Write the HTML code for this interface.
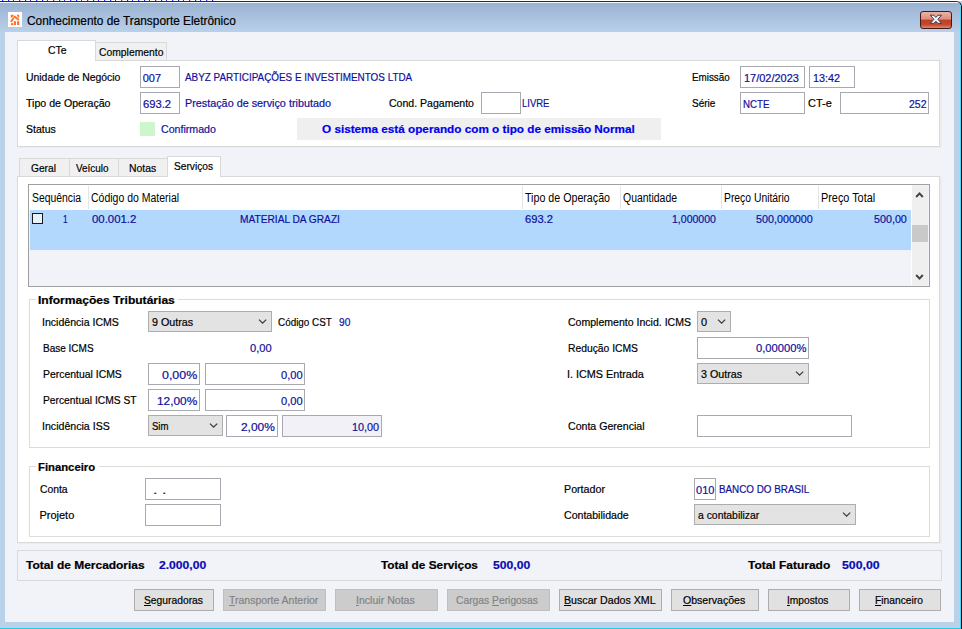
<!DOCTYPE html>
<html><head><meta charset="utf-8">
<style>
html,body{margin:0;padding:0;width:962px;height:629px;overflow:hidden;background:#bad1ea;position:relative;font-family:"Liberation Sans",sans-serif;}
div,span{position:absolute;box-sizing:border-box;}
.t{white-space:pre;transform-origin:0 0;font-family:"Liberation Sans",sans-serif;-webkit-text-stroke:0.2px currentColor;}
.in{background:#fff;border:1px solid #a9a9b1;}
.cb{background:#e3e3e3;border:1px solid #adadad;}
.btn{background:#e1e1e1;border:1px solid #adadad;top:589px;height:22px;}
.dis{background:#cccccc;border:1px solid #bfbfbf;}
.tab{background:#f0f0f0;border:1px solid #d9d9d9;border-bottom:none;}
.pnl{background:#fff;border:1px solid #d9d9d9;box-shadow:2px 1px 0 #ededed;}
.grp{border:1px solid #dcdcdc;}
.chev{width:9px;height:5px;}
</style></head><body>
<!-- top strip -->
<div style="left:0;top:0;width:962px;height:1px;background:#fff"></div>
<div style="left:0;top:0;width:217px;height:1px;background:repeating-linear-gradient(90deg,#fff 0,#fff 2px,#2a3ae0 2px,#2a3ae0 3px,#e8c0e0 3px,#e8c0e0 4px,#fff 4px,#fff 8px,#1a2ad0 8px,#1a2ad0 9px,#b8f0ff 9px,#b8f0ff 10px,#fff 10px,#fff 13px,#5020c0 13px,#5020c0 14px,#fff 14px,#fff 17px)"></div>
<!-- window frame -->
<div style="left:-10px;top:1px;width:972px;height:640px;border:1px solid #2a2a2a;border-right-color:#000;border-top-right-radius:6px;background:#bad1ea;overflow:hidden">
<div style="left:0;top:0;width:100%;height:1px;background:#f4f7fb"></div>
<div style="left:0;top:1px;width:970px;height:29px;background:linear-gradient(#9ab3d1,#b9d0ea)"></div>
<div style="right:0;top:3px;width:1px;height:640px;background:#4cd6f6"></div>
</div>
<div style="left:0;top:628px;width:961px;height:1px;background:#1fcfe2"></div>
<!-- icon -->
<div style="left:8px;top:12px;width:14px;height:15px;background:#fff"></div>
<svg style="position:absolute;left:9px;top:13px" width="12" height="13" viewBox="0 0 12 13">
<g fill="#ff7226">
<path d="M1.8 1.8H4.8Q4.4 4 1.8 4.9Z"/><path d="M7.7 1.8H10.2V4.9Q8.2 4 7.7 1.8Z"/>
<path d="M5.5 3.6L9.4 6.5" stroke="#ff7226" stroke-width="2" stroke-linecap="round"/>
<path d="M4.4 5.3L2.4 8.3" stroke="#ff7226" stroke-width="2" stroke-linecap="round"/>
<path d="M4.8 8.4Q5.9 7.5 7 8.4V12H4.8Z"/><path d="M8 8.4Q9.1 7.5 10.2 8.4V12H8Z"/><path d="M1.8 10.4Q2.9 9.7 4 10.2V12H1.8Z"/>
</g></svg>
<!-- close button -->
<div style="left:920px;top:11px;width:32px;height:18px;border:1px solid #4a1818;border-radius:3px;background:linear-gradient(#ecb2a3 0%,#dd8e7c 45%,#bf3e22 50%,#c44a30 80%,#d98a78 100%)"></div>
<svg style="position:absolute;left:929px;top:13px" width="14" height="12" viewBox="0 0 14 12">
<path d="M1.3 2.2H4.8L6.9 4.4L9 2.2H12.5L8.9 6.3L12.5 10.4H9L6.9 8.2L4.8 10.4H1.3L4.9 6.3Z" fill="#f4f4f6" stroke="#3c3c58" stroke-width="1" stroke-linejoin="round"/>
</svg>
<!-- client -->
<div style="left:5px;top:32px;width:949px;height:590px;background:#f2f3f8"></div>

<!-- CTe panel -->
<div class="pnl" style="left:17px;top:60px;width:923px;height:87px"></div>
<div class="tab" style="left:95px;top:42px;width:72px;height:18px"></div>
<div style="left:17px;top:40px;width:79px;height:21px;background:#fff;border:1px solid #d9d9d9;border-bottom:none"></div>
<div class="in" style="left:140px;top:66px;width:40px;height:22px"></div>
<div class="in" style="left:140px;top:92px;width:40px;height:22px"></div>
<div style="left:140px;top:122px;width:15px;height:14px;background:#cdf6cd"></div>
<div class="in" style="left:481px;top:92px;width:40px;height:22px"></div>
<div style="left:297px;top:118px;width:364px;height:22px;background:#efefef"></div>
<div class="in" style="left:740px;top:66px;width:65px;height:22px"></div>
<div class="in" style="left:809px;top:66px;width:46px;height:22px"></div>
<div class="in" style="left:740px;top:92px;width:65px;height:22px"></div>
<div class="in" style="left:840px;top:92px;width:89px;height:22px"></div>

<!-- second tabs -->
<div class="pnl" style="left:17px;top:176px;width:923px;height:367px"></div>
<div class="tab" style="left:19px;top:158px;width:51px;height:18px"></div>
<div class="tab" style="left:69px;top:158px;width:50px;height:18px"></div>
<div class="tab" style="left:118px;top:158px;width:50px;height:18px"></div>
<div style="left:167px;top:156px;width:54px;height:21px;background:#fff;border:1px solid #d9d9d9;border-bottom:none"></div>

<!-- grid -->
<div style="left:28px;top:184px;width:902px;height:103px;border:1px solid #a0a0a0;background:#f2f3f8"></div>
<div style="left:29px;top:185px;width:882px;height:25px;background:#fff"></div>
<div style="left:88px;top:186px;width:1px;height:23px;background:#e4e4e4"></div>
<div style="left:522px;top:186px;width:1px;height:23px;background:#e4e4e4"></div>
<div style="left:620px;top:186px;width:1px;height:23px;background:#e4e4e4"></div>
<div style="left:721px;top:186px;width:1px;height:23px;background:#e4e4e4"></div>
<div style="left:818px;top:186px;width:1px;height:23px;background:#e4e4e4"></div>
<div style="left:30px;top:210px;width:881px;height:40px;background:#b2d8fd"></div>
<div style="left:32px;top:213px;width:11px;height:11px;border:1px solid #1a1a1a;background:#e8f2fc"></div>
<!-- scrollbar -->
<div style="left:911px;top:185px;width:1px;height:100px;background:#fdfdfd"></div>
<div style="left:912px;top:186px;width:16px;height:99px;background:#efefef"></div>
<div style="left:912px;top:225px;width:16px;height:17px;background:#c9c9c9"></div>
<svg style="position:absolute;left:914px;top:190px" width="11" height="10" viewBox="0 0 11 10"><path d="M2.2 7 L5.5 3.4 L8.8 7" fill="none" stroke="#444" stroke-width="2"/></svg>
<svg style="position:absolute;left:914px;top:272px" width="11" height="10" viewBox="0 0 11 10"><path d="M2.2 3 L5.5 6.6 L8.8 3" fill="none" stroke="#444" stroke-width="2"/></svg>

<!-- group 1 -->
<div class="grp" style="left:29px;top:299px;width:901px;height:149px"></div>
<div style="left:36px;top:295px;width:142px;height:8px;background:#fff"></div>
<div class="cb" style="left:148px;top:311px;width:124px;height:21px"></div>
<div class="in" style="left:148px;top:363px;width:52px;height:22px"></div>
<div class="in" style="left:205px;top:363px;width:100px;height:22px"></div>
<div class="in" style="left:148px;top:389px;width:52px;height:22px"></div>
<div class="in" style="left:205px;top:389px;width:100px;height:22px"></div>
<div class="cb" style="left:148px;top:415px;width:75px;height:21px"></div>
<div class="in" style="left:226px;top:415px;width:52px;height:22px"></div>
<div class="in" style="left:282px;top:415px;width:100px;height:22px;background:#f1f1f7"></div>
<div class="cb" style="left:697px;top:311px;width:34px;height:21px"></div>
<div class="in" style="left:697px;top:337px;width:112px;height:22px"></div>
<div class="cb" style="left:697px;top:363px;width:112px;height:21px"></div>
<div class="in" style="left:697px;top:415px;width:155px;height:22px"></div>

<!-- group 2 -->
<div class="grp" style="left:29px;top:466px;width:901px;height:71px"></div>
<div style="left:36px;top:462px;width:63px;height:8px;background:#fff"></div>
<div class="in" style="left:145px;top:478px;width:76px;height:22px"></div>
<div class="in" style="left:145px;top:504px;width:76px;height:22px"></div>
<div class="in" style="left:694px;top:478px;width:22px;height:22px"></div>
<div class="cb" style="left:694px;top:504px;width:162px;height:21px"></div>

<!-- totals -->
<div style="left:17px;top:550px;width:925px;height:31px;border:1px solid #d9d9d9"></div>

<!-- buttons -->
<div class="btn" style="left:134px;width:80px"></div>
<div class="btn dis" style="left:223px;width:103px"></div>
<div class="btn dis" style="left:335px;width:103px"></div>
<div class="btn dis" style="left:447px;width:103px"></div>
<div class="btn" style="left:559px;width:103px"></div>
<div class="btn" style="left:671px;width:88px"></div>
<div class="btn" style="left:768px;width:82px"></div>
<div class="btn" style="left:859px;width:82px"></div>

<!-- chevrons -->
<svg style="position:absolute;left:258px;top:318px" width="10" height="8" viewBox="0 0 10 8"><path d="M1 1.6 L4.6 5.2 L8.2 1.6" fill="none" stroke="#3a3a3a" stroke-width="1.25"/></svg>
<svg style="position:absolute;left:209px;top:422px" width="10" height="8" viewBox="0 0 10 8"><path d="M1 1.6 L4.6 5.2 L8.2 1.6" fill="none" stroke="#3a3a3a" stroke-width="1.25"/></svg>
<svg style="position:absolute;left:717px;top:318px" width="10" height="8" viewBox="0 0 10 8"><path d="M1 1.6 L4.6 5.2 L8.2 1.6" fill="none" stroke="#3a3a3a" stroke-width="1.25"/></svg>
<svg style="position:absolute;left:795px;top:370px" width="10" height="8" viewBox="0 0 10 8"><path d="M1 1.6 L4.6 5.2 L8.2 1.6" fill="none" stroke="#3a3a3a" stroke-width="1.25"/></svg>
<svg style="position:absolute;left:842px;top:511px" width="10" height="8" viewBox="0 0 10 8"><path d="M1 1.6 L4.6 5.2 L8.2 1.6" fill="none" stroke="#3a3a3a" stroke-width="1.25"/></svg>

<span class="t" style="left:27.40px;top:15px;font-weight:normal;font-size:12px;line-height:12px;color:#000;transform:scaleX(0.9873);">Conhecimento de Transporte Eletrônico</span>
<span class="t" style="left:47.60px;top:45px;font-weight:normal;font-size:11px;line-height:11px;color:#000;transform:scaleX(0.9463);">CTe</span>
<span class="t" style="left:98.80px;top:47px;font-weight:normal;font-size:11px;line-height:11px;color:#000;transform:scaleX(0.9406);">Complemento</span>
<span class="t" style="left:25.80px;top:72px;font-weight:normal;font-size:11px;line-height:11px;color:#000;transform:scaleX(0.9461);">Unidade de Negócio</span>
<span class="t" style="left:25.80px;top:98px;font-weight:normal;font-size:11px;line-height:11px;color:#000;transform:scaleX(0.9643);">Tipo de Operação</span>
<span class="t" style="left:25.80px;top:124px;font-weight:normal;font-size:11px;line-height:11px;color:#000;transform:scaleX(0.9531);">Status</span>
<span class="t" style="left:142.70px;top:73px;font-weight:normal;font-size:11px;line-height:11px;color:#10109a;">007</span>
<span class="t" style="left:142.70px;top:99px;font-weight:normal;font-size:11px;line-height:11px;color:#10109a;transform:scaleX(1.0216);">693.2</span>
<span class="t" style="left:184.90px;top:72px;font-weight:normal;font-size:11px;line-height:11px;color:#10109a;transform:scaleX(0.8993);">ABYZ PARTICIPAÇÕES E INVESTIMENTOS LTDA</span>
<span class="t" style="left:185.00px;top:98px;font-weight:normal;font-size:11px;line-height:11px;color:#10109a;transform:scaleX(0.9821);">Prestação de serviço tributado</span>
<span class="t" style="left:160.50px;top:124px;font-weight:normal;font-size:11px;line-height:11px;color:#10109a;transform:scaleX(0.9658);">Confirmado</span>
<span class="t" style="left:388.70px;top:98px;font-weight:normal;font-size:11px;line-height:11px;color:#000;transform:scaleX(0.9576);">Cond. Pagamento</span>
<span class="t" style="left:521.90px;top:98px;font-weight:normal;font-size:11px;line-height:11px;color:#10109a;transform:scaleX(0.8616);">LIVRE</span>
<span class="t" style="left:322.30px;top:124px;font-weight:bold;font-size:11px;line-height:11px;color:#0000f0;transform:scaleX(1.0659);">O sistema está operando com o tipo de emissão Normal</span>
<span class="t" style="left:691.70px;top:72px;font-weight:normal;font-size:11px;line-height:11px;color:#000;transform:scaleX(0.8939);">Emissão</span>
<span class="t" style="left:744.00px;top:73px;font-weight:normal;font-size:11px;line-height:11px;color:#10109a;transform:scaleX(0.9975);">17/02/2023</span>
<span class="t" style="left:812.80px;top:73px;font-weight:normal;font-size:11px;line-height:11px;color:#10109a;transform:scaleX(0.9851);">13:42</span>
<span class="t" style="left:691.70px;top:98px;font-weight:normal;font-size:11px;line-height:11px;color:#000;transform:scaleX(0.9115);">Série</span>
<span class="t" style="left:742.50px;top:99px;font-weight:normal;font-size:11px;line-height:11px;color:#10109a;transform:scaleX(0.8816);">NCTE</span>
<span class="t" style="left:808.40px;top:98px;font-weight:normal;font-size:11px;line-height:11px;color:#000;transform:scaleX(0.9950);">CT-e</span>
<span class="t" style="left:909.30px;top:99px;font-weight:normal;font-size:11px;line-height:11px;color:#10109a;transform:scaleX(0.9542);">252</span>
<span class="t" style="left:30.80px;top:163px;font-weight:normal;font-size:11px;line-height:11px;color:#000;transform:scaleX(0.9261);">Geral</span>
<span class="t" style="left:76.30px;top:163px;font-weight:normal;font-size:11px;line-height:11px;color:#000;transform:scaleX(0.9036);">Veículo</span>
<span class="t" style="left:129.40px;top:163px;font-weight:normal;font-size:11px;line-height:11px;color:#000;transform:scaleX(0.9441);">Notas</span>
<span class="t" style="left:173.50px;top:161px;font-weight:normal;font-size:11px;line-height:11px;color:#000;transform:scaleX(0.9255);">Serviços</span>
<span class="t" style="left:32.20px;top:192px;font-weight:normal;font-size:12px;line-height:12px;color:#000;transform:scaleX(0.8661);-webkit-text-stroke:0;">Sequência</span>
<span class="t" style="left:90.50px;top:192px;font-weight:normal;font-size:12px;line-height:12px;color:#000;transform:scaleX(0.8745);-webkit-text-stroke:0;">Código do Material</span>
<span class="t" style="left:524.90px;top:192px;font-weight:normal;font-size:12px;line-height:12px;color:#000;transform:scaleX(0.8891);-webkit-text-stroke:0;">Tipo de Operação</span>
<span class="t" style="left:622.70px;top:192px;font-weight:normal;font-size:12px;line-height:12px;color:#000;transform:scaleX(0.8705);-webkit-text-stroke:0;">Quantidade</span>
<span class="t" style="left:724.10px;top:192px;font-weight:normal;font-size:12px;line-height:12px;color:#000;transform:scaleX(0.8630);-webkit-text-stroke:0;">Preço Unitário</span>
<span class="t" style="left:821.30px;top:192px;font-weight:normal;font-size:12px;line-height:12px;color:#000;transform:scaleX(0.9046);-webkit-text-stroke:0;">Preço Total</span>
<span class="t" style="left:62.90px;top:214px;font-weight:normal;font-size:11px;line-height:11px;color:#10109a;transform:scaleX(0.7500);">1</span>
<span class="t" style="left:91.60px;top:214px;font-weight:normal;font-size:11px;line-height:11px;color:#10109a;transform:scaleX(1.0351);">00.001.2</span>
<span class="t" style="left:240.40px;top:214px;font-weight:normal;font-size:11px;line-height:11px;color:#10109a;transform:scaleX(0.9236);">MATERIAL DA GRAZI</span>
<span class="t" style="left:525.00px;top:214px;font-weight:normal;font-size:11px;line-height:11px;color:#10109a;transform:scaleX(1.0143);">693.2</span>
<span class="t" style="left:672.00px;top:214px;font-weight:normal;font-size:11px;line-height:11px;color:#10109a;transform:scaleX(0.9571);">1,000000</span>
<span class="t" style="left:756.20px;top:214px;font-weight:normal;font-size:11px;line-height:11px;color:#10109a;transform:scaleX(0.9776);">500,000000</span>
<span class="t" style="left:874.40px;top:214px;font-weight:normal;font-size:11px;line-height:11px;color:#10109a;transform:scaleX(0.9753);">500,00</span>
<span class="t" style="left:38.20px;top:295px;font-weight:bold;font-size:11px;line-height:11px;color:#000;transform:scaleX(1.0972);">Informações Tributárias</span>
<span class="t" style="left:41.64px;top:317px;font-weight:normal;font-size:11px;line-height:11px;color:#000;transform:scaleX(0.9600);">Incidência ICMS</span>
<span class="t" style="left:151.70px;top:317px;font-weight:normal;font-size:11px;line-height:11px;color:#000;transform:scaleX(0.9746);">9 Outras</span>
<span class="t" style="left:277.70px;top:317px;font-weight:normal;font-size:11px;line-height:11px;color:#000;transform:scaleX(0.8987);">Código CST</span>
<span class="t" style="left:338.80px;top:317px;font-weight:normal;font-size:11px;line-height:11px;color:#10109a;transform:scaleX(0.9243);">90</span>
<span class="t" style="left:42.50px;top:343px;font-weight:normal;font-size:11px;line-height:11px;color:#000;transform:scaleX(0.9097);">Base ICMS</span>
<span class="t" style="left:249.70px;top:343px;font-weight:normal;font-size:11px;line-height:11px;color:#10109a;transform:scaleX(1.0098);">0,00</span>
<span class="t" style="left:42.50px;top:369px;font-weight:normal;font-size:11px;line-height:11px;color:#000;transform:scaleX(0.9480);">Percentual ICMS</span>
<span class="t" style="left:162.00px;top:370px;font-weight:normal;font-size:11px;line-height:11px;color:#10109a;transform:scaleX(1.1271);">0,00%</span>
<span class="t" style="left:280.50px;top:370px;font-weight:normal;font-size:11px;line-height:11px;color:#10109a;transform:scaleX(1.0098);">0,00</span>
<span class="t" style="left:42.50px;top:395px;font-weight:normal;font-size:11px;line-height:11px;color:#000;transform:scaleX(0.9340);">Percentual ICMS ST</span>
<span class="t" style="left:157.00px;top:396px;font-weight:normal;font-size:11px;line-height:11px;color:#10109a;transform:scaleX(1.0766);">12,00%</span>
<span class="t" style="left:280.50px;top:396px;font-weight:normal;font-size:11px;line-height:11px;color:#10109a;transform:scaleX(1.0098);">0,00</span>
<span class="t" style="left:41.54px;top:421px;font-weight:normal;font-size:11px;line-height:11px;color:#000;transform:scaleX(0.9640);">Incidência ISS</span>
<span class="t" style="left:151.70px;top:421px;font-weight:normal;font-size:11px;line-height:11px;color:#000;transform:scaleX(0.8679);">Sim</span>
<span class="t" style="left:241.00px;top:422px;font-weight:normal;font-size:11px;line-height:11px;color:#10109a;transform:scaleX(1.0825);">2,00%</span>
<span class="t" style="left:352.00px;top:422px;font-weight:normal;font-size:11px;line-height:11px;color:#10109a;transform:scaleX(0.9851);">10,00</span>
<span class="t" style="left:567.60px;top:317px;font-weight:normal;font-size:11px;line-height:11px;color:#000;transform:scaleX(0.9583);">Complemento Incid. ICMS</span>
<span class="t" style="left:701.00px;top:317px;font-weight:normal;font-size:11px;line-height:11px;color:#000;">0</span>
<span class="t" style="left:567.60px;top:343px;font-weight:normal;font-size:11px;line-height:11px;color:#000;transform:scaleX(0.9374);">Redução ICMS</span>
<span class="t" style="left:756.20px;top:343px;font-weight:normal;font-size:11px;line-height:11px;color:#10109a;transform:scaleX(1.0168);">0,00000%</span>
<span class="t" style="left:566.62px;top:369px;font-weight:normal;font-size:11px;line-height:11px;color:#000;transform:scaleX(0.9816);">I. ICMS Entrada</span>
<span class="t" style="left:701.00px;top:369px;font-weight:normal;font-size:11px;line-height:11px;color:#000;transform:scaleX(0.9722);">3 Outras</span>
<span class="t" style="left:567.70px;top:421px;font-weight:normal;font-size:11px;line-height:11px;color:#000;transform:scaleX(0.9628);">Conta Gerencial</span>
<span class="t" style="left:38.20px;top:462px;font-weight:bold;font-size:11px;line-height:11px;color:#000;transform:scaleX(1.0268);">Financeiro</span>
<span class="t" style="left:40.00px;top:484px;font-weight:normal;font-size:11px;line-height:11px;color:#000;transform:scaleX(0.9393);">Conta</span>
<span class="t" style="left:39.40px;top:510px;font-weight:normal;font-size:11px;line-height:11px;color:#000;">Projeto</span>
<span class="t" style="left:153.35px;top:485px;font-weight:normal;font-size:11px;line-height:11px;color:#10109a;transform:scaleX(1.4546);">. .</span>
<span class="t" style="left:564.30px;top:484px;font-weight:normal;font-size:11px;line-height:11px;color:#000;transform:scaleX(0.9712);">Portador</span>
<span class="t" style="left:564.30px;top:510px;font-weight:normal;font-size:11px;line-height:11px;color:#000;transform:scaleX(0.9619);">Contabilidade</span>
<span class="t" style="left:696.40px;top:485px;font-weight:normal;font-size:11px;line-height:11px;color:#10109a;transform:scaleX(1.0035);">010</span>
<span class="t" style="left:718.70px;top:484px;font-weight:normal;font-size:11px;line-height:11px;color:#10109a;transform:scaleX(0.8944);">BANCO DO BRASIL</span>
<span class="t" style="left:698.00px;top:510px;font-weight:normal;font-size:11px;line-height:11px;color:#000;transform:scaleX(0.9455);">a contabilizar</span>
<span class="t" style="left:26.20px;top:560px;font-weight:bold;font-size:11px;line-height:11px;color:#000;transform:scaleX(1.0862);">Total de Mercadorias</span>
<span class="t" style="left:158.90px;top:560px;font-weight:bold;font-size:11px;line-height:11px;color:#0a0ab4;transform:scaleX(1.1007);">2.000,00</span>
<span class="t" style="left:381.20px;top:560px;font-weight:bold;font-size:11px;line-height:11px;color:#000;transform:scaleX(1.0737);">Total de Serviços</span>
<span class="t" style="left:492.60px;top:560px;font-weight:bold;font-size:11px;line-height:11px;color:#0a0ab4;transform:scaleX(1.1036);">500,00</span>
<span class="t" style="left:748.00px;top:560px;font-weight:bold;font-size:11px;line-height:11px;color:#000;transform:scaleX(1.0876);">Total Faturado</span>
<span class="t" style="left:842.20px;top:560px;font-weight:bold;font-size:11px;line-height:11px;color:#0a0ab4;transform:scaleX(1.1155);">500,00</span>
<span class="t" style="left:144.00px;top:595px;font-weight:normal;font-size:11px;line-height:11px;color:#000;transform:scaleX(0.9356);"><u>S</u>eguradoras</span>
<span class="t" style="left:228.70px;top:595px;font-weight:normal;font-size:11px;line-height:11px;color:#838383;transform:scaleX(0.9526);"><u>T</u>ransporte Anterior</span>
<span class="t" style="left:356.04px;top:595px;font-weight:normal;font-size:11px;line-height:11px;color:#838383;transform:scaleX(0.9615);"><u>I</u>ncluir Notas</span>
<span class="t" style="left:456.20px;top:595px;font-weight:normal;font-size:11px;line-height:11px;color:#838383;transform:scaleX(0.9360);">Cargas <u>P</u>erigosas</span>
<span class="t" style="left:564.10px;top:595px;font-weight:normal;font-size:11px;line-height:11px;color:#000;transform:scaleX(0.9668);"><u>B</u>uscar Dados XML</span>
<span class="t" style="left:682.60px;top:595px;font-weight:normal;font-size:11px;line-height:11px;color:#000;transform:scaleX(0.9601);"><u>O</u>bservações</span>
<span class="t" style="left:787.37px;top:595px;font-weight:normal;font-size:11px;line-height:11px;color:#000;transform:scaleX(0.9291);"><u>I</u>mpostos</span>
<span class="t" style="left:875.00px;top:595px;font-weight:normal;font-size:11px;line-height:11px;color:#000;transform:scaleX(0.9309);"><u>F</u>inanceiro</span>
</body></html>
